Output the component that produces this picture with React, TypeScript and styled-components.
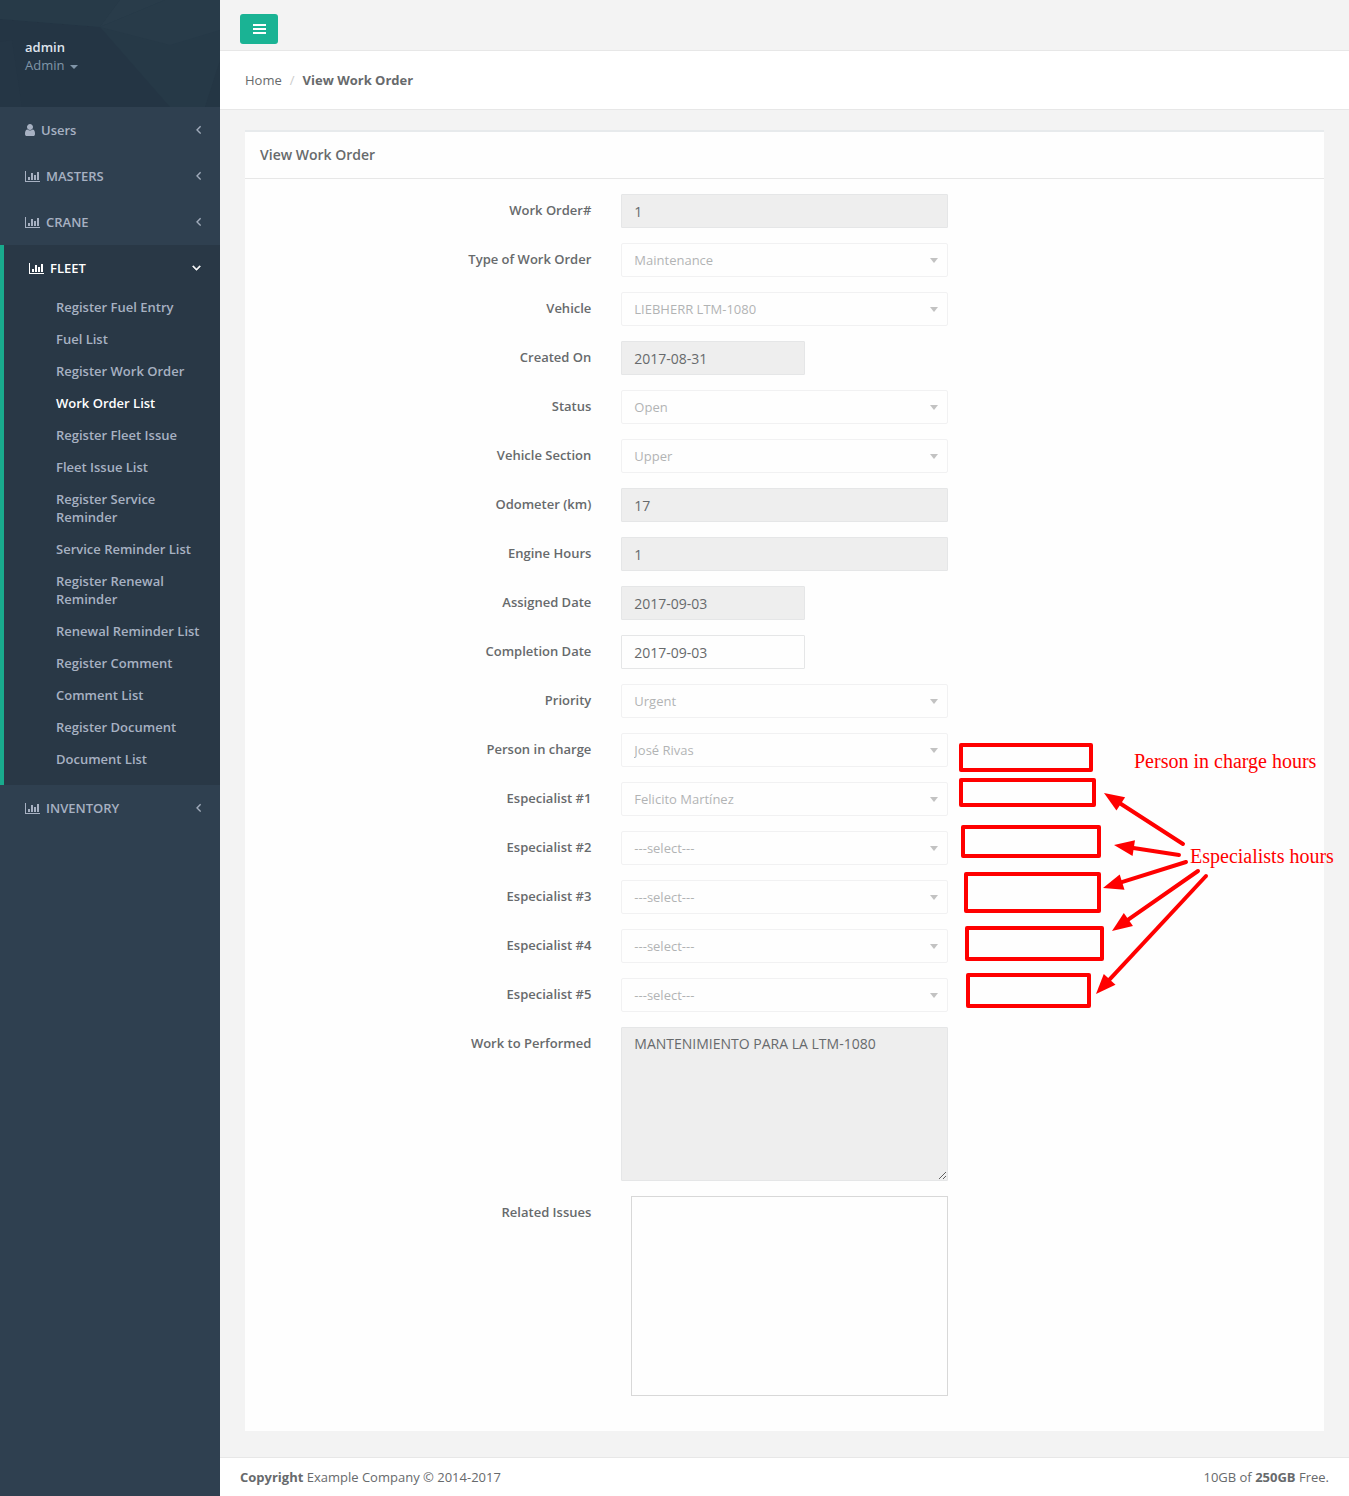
import React from "react";
import styled, { createGlobalStyle, css } from "styled-components";

const GlobalStyle = createGlobalStyle`
  *, *::before, *::after { box-sizing: border-box; }
  body {
    margin: 0;
    background: #2f4050;
    color: #676a6c;
    font-family: "Open Sans", "Noto Sans", sans-serif;
    font-size: 13px;
    line-height: 18px;
  }
  a { color: inherit; text-decoration: none; }
  ul, ol { list-style: none; margin: 0; padding: 0; }
`;

/* ---------- icons ---------- */

const Glyph = styled.svg<{ $w: number }>`
  width: ${(p) => p.$w}px;
  height: 14px;
  fill: currentColor;
  flex: none;
`;

const ChartIcon = () => (
  <Glyph $w={15} viewBox="0 0 15 14" aria-hidden="true">
    <path d="M0 2h1v10h14v1H0zM3 8h2v3H3zM6 4h2v7H6zM9 6h2v5H9zM12 3h2v8h-2z" />
  </Glyph>
);

const UserIcon = () => (
  <Glyph $w={10} viewBox="256 0 1280 1792" aria-hidden="true">
    <path d="M1536 1399q0 109-62.500 187t-150.500 78h-854q-88 0-150.500-78t-62.500-187q0-85 8.500-160.500t31.500-152 58.500-131 94-89 134.500-34.500q131 128 313 128t313-128q76 0 134.500 34.500t94 89 58.500 131 31.500 152 8.500 160.500zm-256-887q0 159-112.500 271.500t-271.500 112.500-271.500-112.500-112.500-271.500 112.500-271.500 271.500-112.500 271.500 112.500 112.500 271.500z" />
  </Glyph>
);

const AngleLeft = () => (
  <Glyph $w={6} viewBox="448 80 768 1792" stroke="currentColor" strokeWidth="50" aria-hidden="true">
    <path d="M1203 544q0 13-10 23l-393 393 393 393q10 10 10 23t-10 23l-50 50q-10 10-23 10t-23-10l-466-466q-10-10-10-23t10-23l466-466q10-10 23-10t23 10l50 50q10 10 10 23z" />
  </Glyph>
);

const AngleDown = () => (
  <Glyph $w={9} viewBox="320 40 1152 1792" stroke="currentColor" strokeWidth="90" aria-hidden="true">
    <path d="M1395 736q0 13-10 23l-466 466q-10 10-23 10t-23-10l-466-466q-10-10-10-23t10-23l50-50q10-10 23-10t23 10l393 393 393-393q10-10 23-10t23 10l50 50q10 10 10 23z" />
  </Glyph>
);

const BarsIcon = () => (
  <Glyph $w={14} viewBox="0 0 14 14" aria-hidden="true">
    <path d="M1 2h13v2H1zM1 6h13v2H1zM1 10h13v2H1z" />
  </Glyph>
);

/* ---------- shell ---------- */

const Shell = styled.div`
  display: flex;
  min-height: 100vh;
`;

const Sidebar = styled.nav`
  flex: 0 0 220px;
  background: #2f4050;
  color: #a7b1c2;
  font-weight: 600;
`;

const Profile = styled.div`
  position: relative;
  padding: 38px 25px 33px;
  background: #263947;
`;

const ProfilePattern = styled.svg`
  position: absolute;
  inset: 0;
  width: 100%;
  height: 100%;
`;

const ProfileLink = styled.a`
  position: relative;
  display: block;
`;

const ProfileName = styled.strong`
  display: block;
  color: #dfe4ed;
  font-weight: 600;
`;

const ProfileRole = styled.span`
  display: flex;
  align-items: center;
  gap: 6px;
  color: #8095a8;
  font-weight: 400;
`;

const Caret = styled.span`
  margin-top: 3px;
  border: 4px solid transparent;
  border-top-color: currentColor;
  border-bottom: 0;
`;

const MenuItem = styled.li<{ $active?: boolean }>`
  ${(p) =>
    p.$active &&
    css`
      background: #293846;
      border-left: 4px solid #19aa8d;
      padding-bottom: 10px;
    `}
`;

const MenuLink = styled.a<{ $active?: boolean }>`
  display: flex;
  align-items: center;
  gap: 6px;
  padding: 14px 19px 14px 25px;
  color: ${(p) => (p.$active ? "#fff" : "#a7b1c2")};
`;

const MenuText = styled.span`
  flex: 1;
`;

const SubLink = styled.a<{ $active?: boolean }>`
  display: block;
  padding: 7px 10px 7px 52px;
  color: ${(p) => (p.$active ? "#fff" : "#a7b1c2")};
`;

const Main = styled.div`
  flex: 1;
  min-width: 0;
  display: flex;
  flex-direction: column;
  background: #f3f3f3;
`;

const Toolbar = styled.header`
  height: 51px;
  padding: 14px 20px 0;
  border-bottom: 1px solid #e7e7e7;
`;

const MenuButton = styled.button`
  display: flex;
  align-items: center;
  justify-content: center;
  width: 38px;
  height: 30px;
  padding: 0;
  border: 0;
  border-radius: 3px;
  background: #1ab394;
  color: #fff;
`;

const Breadcrumb = styled.ol`
  display: flex;
  padding: 20px 25px;
  background: #fff;
  border-bottom: 1px solid #e7e7e7;
`;

const Crumb = styled.li<{ $current?: boolean }>`
  font-weight: ${(p) => (p.$current ? 700 : 400)};
  &:not(:first-child)::before {
    content: "/";
    padding: 0 8px;
    color: #ccc;
    font-weight: 400;
  }
`;

const Content = styled.main`
  flex: 1;
  padding: 20px 25px 26px;
`;

const Card = styled.section`
  position: relative;
  background: #fefefe;
  border-top: 2px solid #e7eaec;
`;

const CardTitle = styled.h1`
  margin: 0;
  padding: 14px 15px;
  border-bottom: 1px solid #e7e7e7;
  font-size: 14px;
  font-weight: 600;
  line-height: 18px;
`;

const Footer = styled.footer`
  display: flex;
  justify-content: space-between;
  padding: 10px 20px;
  background: #fff;
  border-top: 1px solid #e7e7e7;
`;

/* ---------- form ---------- */

const Form = styled.form`
  display: flex;
  flex-direction: column;
  gap: 15px;
  padding: 15px 5px 35px;
`;

const Row = styled.div`
  display: grid;
  grid-template-columns: repeat(3, 1fr);
`;

const Label = styled.label`
  padding: 7px 15px 0;
  text-align: right;
  font-weight: 600;
`;

const Cell = styled.div<{ $indent?: boolean }>`
  display: flex;
  padding: 0 15px 0 ${(p) => (p.$indent ? 25 : 15)}px;
`;

const control = css`
  width: 100%;
  margin: 0;
  border: 1px solid #e5e6e7;
  border-radius: 1px;
  color: #676a6c;
  font-family: inherit;
`;

const TextInput = styled.input<{ $short?: boolean }>`
  ${control}
  width: ${(p) => (p.$short ? "184px" : "100%")};
  height: 34px;
  padding: 6px 12px;
  font-size: 14px;
  background: ${(p) => (p.readOnly ? "#eee" : "#fefefe")};
`;

const SelectWrap = styled.div`
  position: relative;
  width: 100%;
  opacity: 0.5;
`;

const Select = styled.select`
  ${control}
  display: block;
  height: 34px;
  padding: 6px 12px;
  border-radius: 2px;
  font-size: 13px;
  background: #fefefe;
  appearance: none;
  opacity: 1;
`;

const SelectArrow = styled.span`
  position: absolute;
  right: 10px;
  top: 15px;
  border: 4px solid transparent;
  border-top: 5px solid #888;
  border-bottom: 0;
  pointer-events: none;
`;

const TextArea = styled.textarea`
  ${control}
  display: block;
  height: 154px;
  padding: 6px 12px;
  font-size: 14px;
  line-height: 20px;
  background: #eee;
  resize: both;
`;

const IssueList = styled.select`
  ${control}
  height: 200px;
  border-color: #d8d8d8;
  border-radius: 0;
  background: #fefefe;
`;

/* ---------- hand-drawn notes over the form ---------- */

const Notes = styled.div`
  position: absolute;
  left: -25px;
  top: -132px;
  width: 0;
  height: 0;
`;

const NoteBox = styled.div<{ $x: number; $y: number; $w: number; $h: number }>`
  position: absolute;
  left: ${(p) => p.$x}px;
  top: ${(p) => p.$y}px;
  width: ${(p) => p.$w}px;
  height: ${(p) => p.$h}px;
  border: 4px solid #f00;
  border-radius: 2px;
`;

const NoteText = styled.span<{ $x: number; $y: number }>`
  position: absolute;
  left: ${(p) => p.$x}px;
  top: ${(p) => p.$y}px;
  color: #f00;
  font-family: "Liberation Serif", serif;
  font-size: 20px;
  line-height: 24px;
  white-space: nowrap;
`;

const NoteArrows = styled.svg`
  position: absolute;
  left: 870px;
  top: 780px;
  width: 130px;
  height: 220px;
  fill: #f00;
  stroke: #f00;
`;

type Field =
  | { kind: "text"; label: string; value: string; short?: boolean; editable?: boolean }
  | { kind: "select"; label: string; value: string };

const fields: Field[] = [
  { kind: "text", label: "Work Order#", value: "1" },
  { kind: "select", label: "Type of Work Order", value: "Maintenance" },
  { kind: "select", label: "Vehicle", value: "LIEBHERR LTM-1080" },
  { kind: "text", label: "Created On", value: "2017-08-31", short: true },
  { kind: "select", label: "Status", value: "Open" },
  { kind: "select", label: "Vehicle Section", value: "Upper" },
  { kind: "text", label: "Odometer (km)", value: "17" },
  { kind: "text", label: "Engine Hours", value: "1" },
  { kind: "text", label: "Assigned Date", value: "2017-09-03", short: true },
  { kind: "text", label: "Completion Date", value: "2017-09-03", short: true, editable: true },
  { kind: "select", label: "Priority", value: "Urgent" },
  { kind: "select", label: "Person in charge", value: "José Rivas" },
  { kind: "select", label: "Especialist #1", value: "Felicito Martínez" },
  { kind: "select", label: "Especialist #2", value: "---select---" },
  { kind: "select", label: "Especialist #3", value: "---select---" },
  { kind: "select", label: "Especialist #4", value: "---select---" },
  { kind: "select", label: "Especialist #5", value: "---select---" },
];

const fleetLinks = [
  "Register Fuel Entry",
  "Fuel List",
  "Register Work Order",
  "Work Order List",
  "Register Fleet Issue",
  "Fleet Issue List",
  "Register Service Reminder",
  "Service Reminder List",
  "Register Renewal Reminder",
  "Renewal Reminder List",
  "Register Comment",
  "Comment List",
  "Register Document",
  "Document List",
];

const menu = [
  { text: "Users", icon: <UserIcon /> },
  { text: "MASTERS", icon: <ChartIcon /> },
  { text: "CRANE", icon: <ChartIcon /> },
  { text: "FLEET", icon: <ChartIcon />, links: fleetLinks },
  { text: "INVENTORY", icon: <ChartIcon /> },
];

/* x, y, width, height within the main column */
const noteBoxes = [
  [739, 743, 134, 29],
  [739, 778, 137, 29],
  [741, 825, 140, 33],
  [744, 872, 137, 41],
  [745, 926, 139, 35],
  [746, 973, 125, 35],
];

/* tail x, tail y, tip x, tip y within the arrow drawing */
const noteArrows = [
  [93, 64, 14, 13],
  [89, 75, 24, 65],
  [96, 82, 13, 108],
  [108, 91, 22, 151],
  [116, 96, 6, 214],
];

const Arrow = ({ points: [x1, y1, x2, y2] }: { points: number[] }) => {
  const length = Math.hypot(x2 - x1, y2 - y1);
  const ux = (x2 - x1) / length;
  const uy = (y2 - y1) / length;
  const bx = x2 - ux * 20;
  const by = y2 - uy * 20;
  return (
    <g>
      <line x1={x1} y1={y1} x2={bx + ux * 2} y2={by + uy * 2} strokeWidth="4" strokeLinecap="round" />
      <polygon
        stroke="none"
        points={`${x2},${y2} ${bx - uy * 8},${by + ux * 8} ${bx + uy * 8},${by - ux * 8}`}
      />
    </g>
  );
};

const FieldRow = ({ field, id }: { field: Field; id: string }) => (
  <Row>
    <Label htmlFor={id}>{field.label}</Label>
    <Cell>
      {field.kind === "text" ? (
        <TextInput id={id} defaultValue={field.value} $short={field.short} readOnly={!field.editable} />
      ) : (
        <SelectWrap>
          <Select id={id} disabled>
            <option>{field.value}</option>
          </Select>
          <SelectArrow />
        </SelectWrap>
      )}
    </Cell>
  </Row>
);

export default function App() {
  return (
    <>
      <GlobalStyle />
      <Shell>
        <Sidebar>
          <Profile>
            <ProfilePattern viewBox="0 0 220 107" preserveAspectRatio="none" aria-hidden="true">
              <path d="M0 19L100 27L170 107H0z" fill="#243544" />
              <path d="M0 19L100 27L120 0H0z" fill="#273a48" />
              <path d="M120 0L100 27L165 0z" fill="#293c4a" />
              <path d="M165 0L100 27L170 45L220 30V0z" fill="#283b49" />
              <path d="M0 42L12 40L22 107H0z" fill="#253645" />
              <path d="M220 60L205 107H220z" fill="#243644" />
            </ProfilePattern>
            <ProfileLink href="#">
              <ProfileName>admin</ProfileName>
              <ProfileRole>
                Admin <Caret />
              </ProfileRole>
            </ProfileLink>
          </Profile>
          <ul>
            {menu.map((item) => (
              <MenuItem key={item.text} $active={!!item.links}>
                <MenuLink href="#" $active={!!item.links}>
                  {item.icon}
                  <MenuText>{item.text}</MenuText>
                  {item.links ? <AngleDown /> : <AngleLeft />}
                </MenuLink>
                {item.links && (
                  <ul>
                    {item.links.map((link) => (
                      <li key={link}>
                        <SubLink href="#" $active={link === "Work Order List"}>
                          {link}
                        </SubLink>
                      </li>
                    ))}
                  </ul>
                )}
              </MenuItem>
            ))}
          </ul>
        </Sidebar>
        <Main>
          <Toolbar>
            <MenuButton type="button" aria-label="Toggle menu">
              <BarsIcon />
            </MenuButton>
          </Toolbar>
          <Breadcrumb>
            <Crumb>
              <a href="#">Home</a>
            </Crumb>
            <Crumb $current>View Work Order</Crumb>
          </Breadcrumb>
          <Content>
            <Card>
              <CardTitle>View Work Order</CardTitle>
              <Form>
                {fields.map((field, i) => (
                  <FieldRow key={field.label} field={field} id={`field-${i}`} />
                ))}
                <Row>
                  <Label htmlFor="work">Work to Performed</Label>
                  <Cell>
                    <TextArea id="work" readOnly defaultValue="MANTENIMIENTO PARA LA LTM-1080" />
                  </Cell>
                </Row>
                <Row>
                  <Label htmlFor="issues">Related Issues</Label>
                  <Cell $indent>
                    <IssueList id="issues" multiple />
                  </Cell>
                </Row>
              </Form>
              <Notes>
                {noteBoxes.map(([x, y, w, h]) => (
                  <NoteBox key={y} $x={x} $y={y} $w={w} $h={h} />
                ))}
                <NoteArrows viewBox="0 0 130 220" aria-hidden="true">
                  {noteArrows.map((points) => (
                    <Arrow key={points[1]} points={points} />
                  ))}
                </NoteArrows>
                <NoteText $x={914} $y={749}>
                  Person in charge hours
                </NoteText>
                <NoteText $x={970} $y={844}>
                  Especialists hours
                </NoteText>
              </Notes>
            </Card>
          </Content>
          <Footer>
            <span>
              <strong>Copyright</strong> Example Company © 2014-2017
            </span>
            <span>
              10GB of <strong>250GB</strong> Free.
            </span>
          </Footer>
        </Main>
      </Shell>
    </>
  );
}
